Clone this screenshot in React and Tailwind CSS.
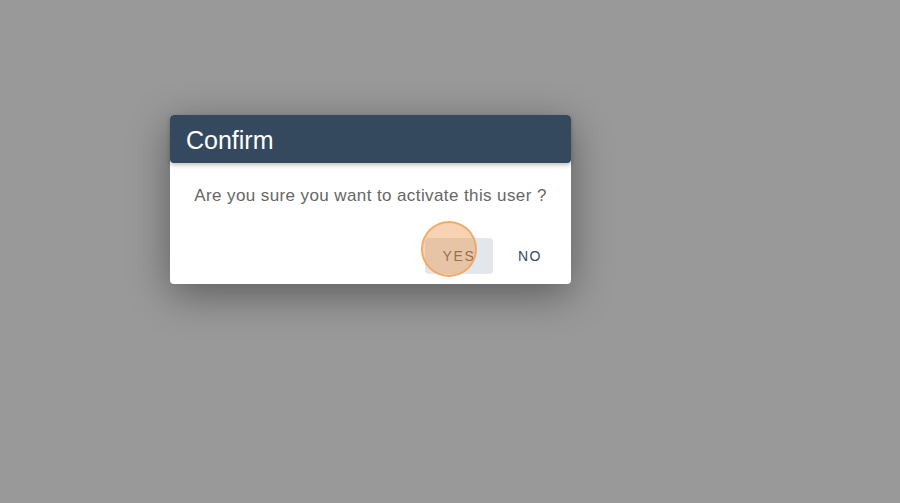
export default function App() {
    return (
        <div className="w-[900px] h-[503px] bg-[#999999] font-['Liberation_Sans',Arial,sans-serif] pt-[115px] pl-[170px]">
            <div className="w-[401px] h-[169px] bg-white rounded-[4px] shadow-[0_10px_40px_rgba(0,0,0,0.4)] flex flex-col">
                <div className="h-[48px] bg-[#34495e] rounded-[4px] shadow-[0_2px_4px_rgba(0,0,0,0.25)] flex items-center px-4 pt-[3px]">
                    <h2 className="text-[25px] text-white leading-none">Confirm</h2>
                </div>
                <p className="mt-[21px] text-center text-[17px] text-[#666666] tracking-[0.4px] leading-[24px]">
                    Are you sure you want to activate this user ?
                </p>
                <div className="mt-auto mb-[10px] flex justify-end gap-[9px] pr-[13px]">
                    <div className="relative">
                        <button className="w-[68px] h-[36px] rounded-[4px] bg-[#e3e6ea] text-[14px] tracking-[1.6px] text-[#555555]">
                            YES
                        </button>
                        <span className="absolute left-[-4px] top-[-17px] w-[56px] h-[56px] rounded-full bg-[rgba(238,150,75,0.42)] border-2 border-[rgba(240,165,95,0.9)]"></span>
                    </div>
                    <button className="w-[56px] h-[36px] rounded-[4px] text-[14px] tracking-[1.6px] text-[#34495e]">
                        NO
                    </button>
                </div>
            </div>
        </div>
    )
}
